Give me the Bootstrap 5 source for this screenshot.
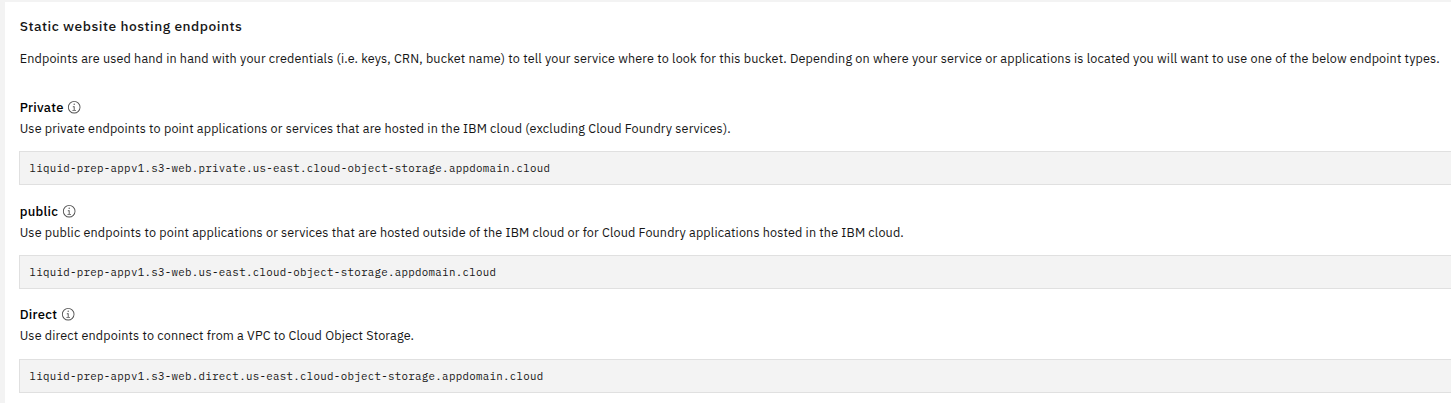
<!DOCTYPE html>
<html lang="en">
<head>
<meta charset="utf-8">
<meta name="viewport" content="width=device-width, initial-scale=1">
<title>Static website hosting endpoints</title>
<link href="https://cdn.jsdelivr.net/npm/bootstrap@5.3.0/dist/css/bootstrap.min.css" rel="stylesheet">
<style>
body{background:#f3f3f3;color:#161616;font-family:"IBM Plex Sans",Roboto,"Liberation Sans",sans-serif;font-size:12.6px;line-height:18px;overflow:hidden}
.panel{background:#fff;margin:2px 0 0 5px;padding:14px 0 0 14px;height:401px;white-space:nowrap}
.panel-title,.intro,.endpoint-name,.endpoint-text{padding-left:.7px}
.panel-title{font-size:13.8px;line-height:20px;font-weight:500;letter-spacing:.52px}
.intro{margin:13px 0 32px;letter-spacing:.147px}
.endpoint{height:104px}
.endpoint-name{font-size:13px;line-height:18px;font-weight:500;letter-spacing:.3px;color:#000}
.endpoint-name svg{width:14.4px;height:14.4px;margin:-1px 0 0 3.4px;fill:#525252}
.endpoint-text{margin-top:2px;letter-spacing:.144px}
.endpoint-url{height:34px;margin-top:14px;padding:0 9.4px 1px;background:#f3f3f3;border:1px solid #e0e0e0;border-right:0;font-family:"IBM Plex Mono","Liberation Mono",monospace;font-size:10.8px;letter-spacing:.288px}
.endpoint-last{margin-top:-1px}
.endpoint-last .endpoint-url{margin-top:15px}
</style>
</head>
<body>
<svg class="d-none" xmlns="http://www.w3.org/2000/svg">
<symbol id="info" viewBox="0 0 32 32"><path d="M17 22v-8h-4v2h2v6h-3v2h8v-2zM16 8a1.5 1.5 0 1 0 1.5 1.5A1.5 1.5 0 0 0 16 8z"/><path d="M16 30a14 14 0 1 1 14-14 14 14 0 0 1-14 14zm0-26a12 12 0 1 0 12 12A12 12 0 0 0 16 4z"/></symbol>
</svg>
<main class="panel">
<h1 class="panel-title mb-0">Static website hosting endpoints</h1>
<p class="intro">Endpoints are used hand in hand with your credentials (i.e. keys, CRN, bucket name) to tell your service where to look for this bucket. Depending on where your service or applications is located you will want to use one of the below endpoint types.</p>
<section class="endpoint">
<h2 class="endpoint-name d-flex align-items-center mb-0">Private <svg aria-hidden="true"><use href="#info"/></svg></h2>
<p class="endpoint-text mb-0">Use private endpoints to point applications or services that are hosted in the IBM cloud (excluding Cloud Foundry services).</p>
<div class="endpoint-url d-flex align-items-center">liquid-prep-appv1.s3-web.private.us-east.cloud-object-storage.appdomain.cloud</div>
</section>
<section class="endpoint">
<h2 class="endpoint-name d-flex align-items-center mb-0">public <svg aria-hidden="true"><use href="#info"/></svg></h2>
<p class="endpoint-text mb-0">Use public endpoints to point applications or services that are hosted outside of the IBM cloud or for Cloud Foundry applications hosted in the IBM cloud.</p>
<div class="endpoint-url d-flex align-items-center">liquid-prep-appv1.s3-web.us-east.cloud-object-storage.appdomain.cloud</div>
</section>
<section class="endpoint endpoint-last">
<h2 class="endpoint-name d-flex align-items-center mb-0">Direct <svg aria-hidden="true"><use href="#info"/></svg></h2>
<p class="endpoint-text mb-0">Use direct endpoints to connect from a VPC to Cloud Object Storage.</p>
<div class="endpoint-url d-flex align-items-center">liquid-prep-appv1.s3-web.direct.us-east.cloud-object-storage.appdomain.cloud</div>
</section>
</main>
</body>
</html>
